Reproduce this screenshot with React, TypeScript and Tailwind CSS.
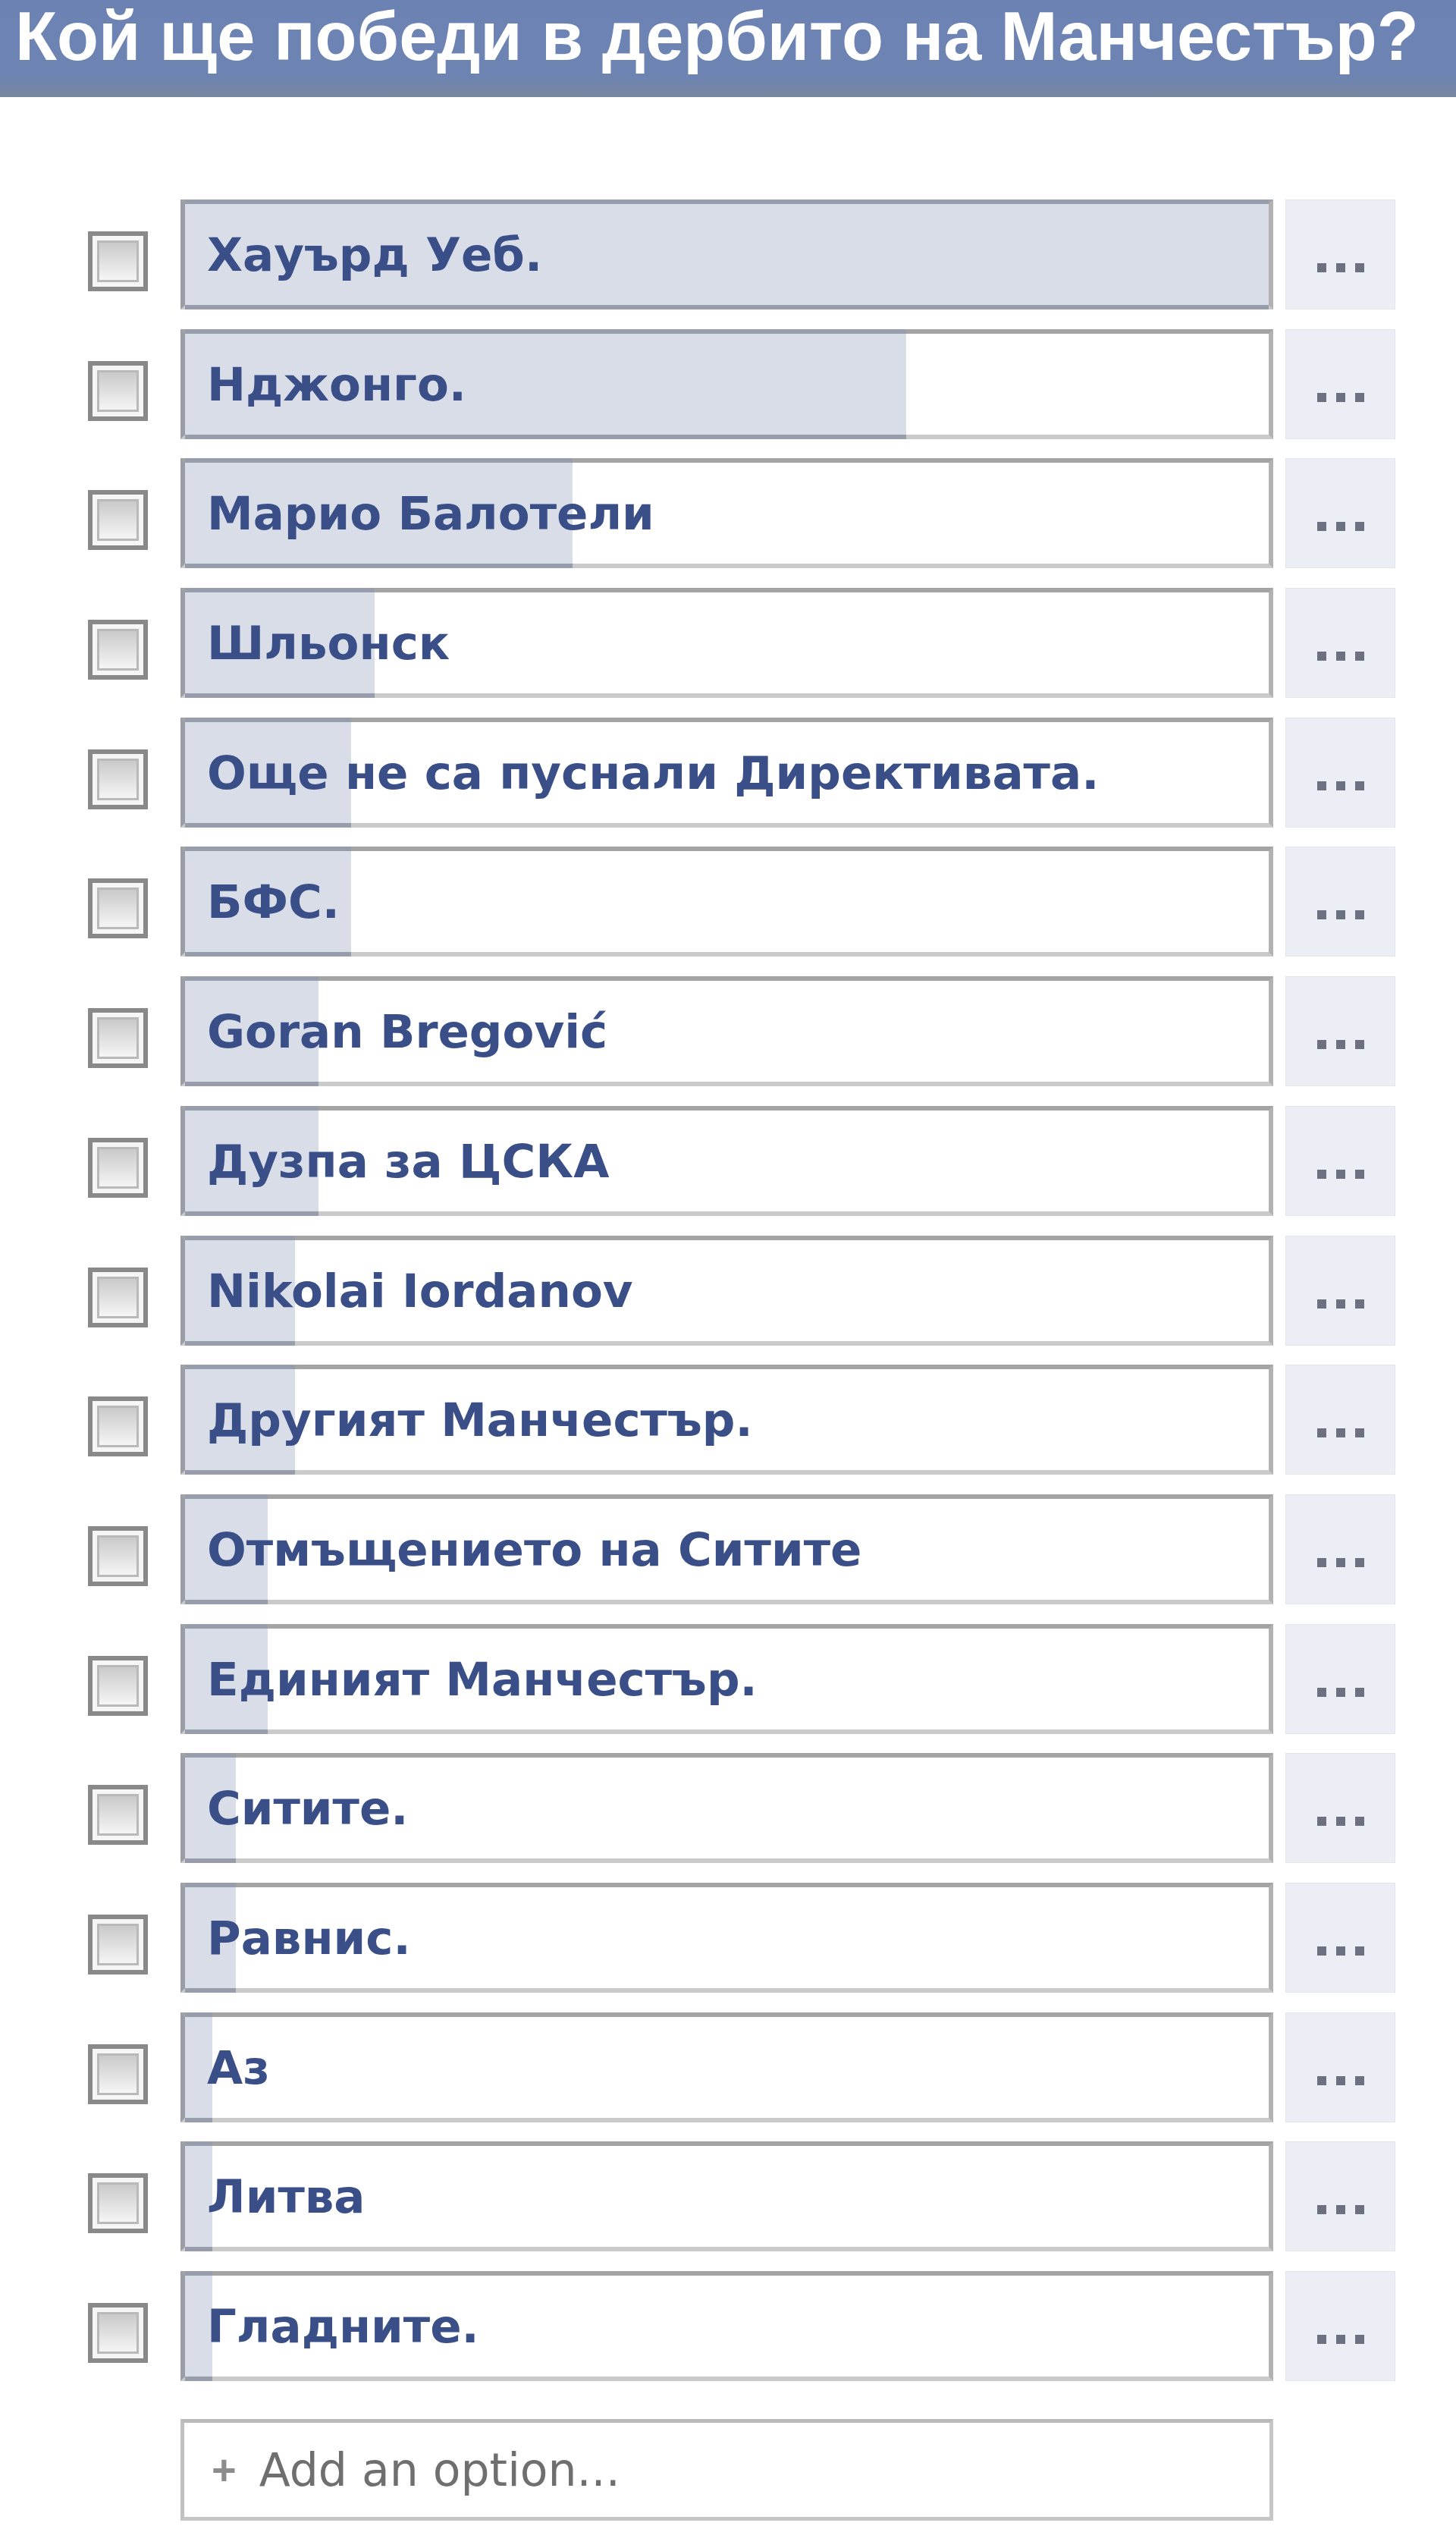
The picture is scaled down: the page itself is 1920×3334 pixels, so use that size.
import React from "react";

type Opt = { label: string; bar: number };

const options: Opt[] = [
  { label: "Хауърд Уеб.", bar: 1429 },
  { label: "Нджонго.", bar: 951 },
  { label: "Марио Балотели", bar: 511 },
  { label: "Шльонск", bar: 250 },
  { label: "Още не са пуснали Директивата.", bar: 219 },
  { label: "БФС.", bar: 219 },
  { label: "Goran Bregović", bar: 176 },
  { label: "Дузпа за ЦСКА", bar: 176 },
  { label: "Nikolai Iordanov", bar: 145 },
  { label: "Другият Манчестър.", bar: 145 },
  { label: "Отмъщението на Ситите", bar: 109 },
  { label: "Единият Манчестър.", bar: 109 },
  { label: "Ситите.", bar: 67 },
  { label: "Равнис.", bar: 67 },
  { label: "Аз", bar: 36 },
  { label: "Литва", bar: 36 },
  { label: "Гладните.", bar: 36 },
];

function Checkbox() {
  return (
    <div className="mt-[42px] h-[79px] w-[79px] shrink-0 border-[6px] border-[#898989] bg-[#f6f6f6] p-[6px]">
      <div className="h-full w-full border-[3px] border-[#b9b9b9] bg-[linear-gradient(to_bottom,#cacaca,#f5f5f5)]" />
    </div>
  );
}

function Row({ opt }: { opt: Opt }) {
  return (
    <div className="flex items-start">
      <Checkbox />
      <div className="relative ml-[43px] flex h-[145px] w-[1441px] shrink-0 items-center border-[6px] border-t-[#a4a4a4] border-l-[#9a9da6] border-r-[#b2b2b2] border-b-[#cacaca] bg-white">
        <div
          className="absolute -top-[6px] -bottom-[6px] left-0 border-y-[6px] border-y-[#989dab] bg-[#d8dde8]"
          style={{ width: opt.bar }}
        />
        <span className="relative whitespace-nowrap pl-[29px] font-['DejaVu_Sans',Verdana,sans-serif] text-[61px] font-bold leading-[61px] text-[#3a4f88]">
          {opt.label}
        </span>
      </div>
      <div className="ml-[16px] flex h-[145px] w-[145px] shrink-0 items-start justify-center border border-[#e3e5ed] bg-[#eceef5] pt-[83px]">
        <div className="flex gap-[13px]">
          <span className="h-[12px] w-[12px] bg-[#6b7180]" />
          <span className="h-[12px] w-[12px] bg-[#6b7180]" />
          <span className="h-[12px] w-[12px] bg-[#6b7180]" />
        </div>
      </div>
    </div>
  );
}

export default function App() {
  return (
    <div className="min-h-[3334px] w-[1920px] bg-white">
      <div className="h-[128px] bg-[linear-gradient(to_bottom,#6b82b3_0%,#6d84b3_78%,#79869f_100%)] pl-[20px] pt-[3px]">
        <h1 className="whitespace-nowrap font-['Liberation_Sans',Arial,sans-serif] text-[90px] font-bold leading-[90px] text-white">
          Кой ще победи в дербито на Манчестър?
        </h1>
      </div>
      <div className="flex flex-col gap-[25.7px] pl-[116px] pt-[135px]">
        {options.map((o) => (
          <Row key={o.label} opt={o} />
        ))}
      </div>
      <div className="ml-[238px] mt-[50px] flex h-[134px] w-[1441px] items-center border-[5px] border-t-[#bababa] border-l-[#c0c0c0] border-r-[#c6c6c6] border-b-[#c6c6c6] bg-white pl-[36px]">
        <span className="font-['Liberation_Sans',Arial,sans-serif] text-[56px] font-bold leading-[60px] text-[#8c8c8c]">
          +
        </span>
        <span className="ml-[30px] font-['DejaVu_Sans',Verdana,sans-serif] text-[60px] leading-[60px] text-[#6f6f6f]">
          Add an option...
        </span>
      </div>
    </div>
  );
}
